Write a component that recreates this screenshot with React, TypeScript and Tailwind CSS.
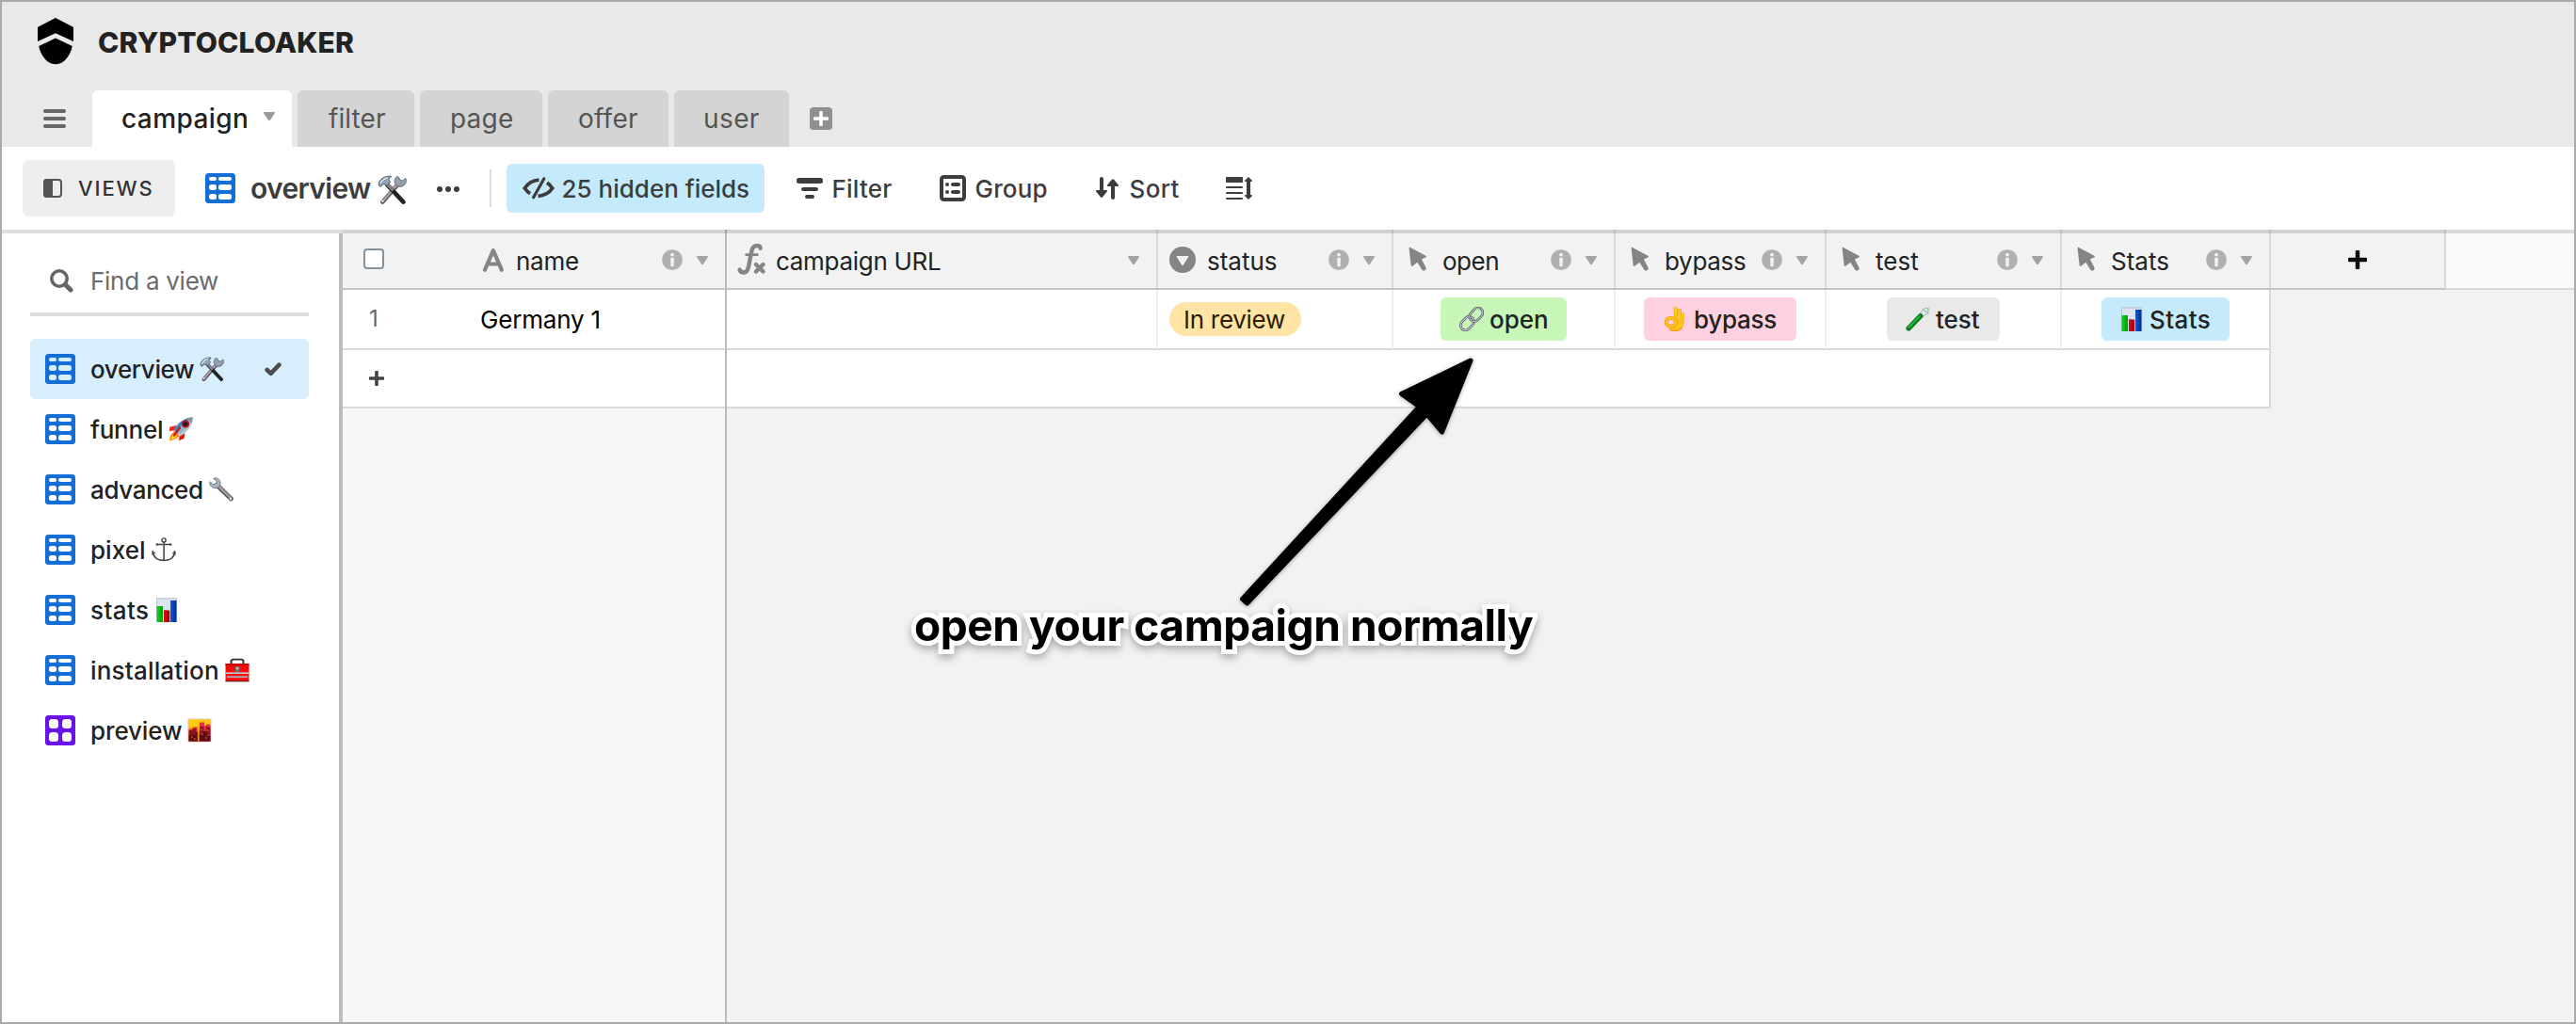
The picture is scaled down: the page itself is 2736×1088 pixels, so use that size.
import type { ReactNode } from "react";

/* ---------- interface icons ---------- */

const Logo = () => (
  <svg width="38" height="50" viewBox="0 0 38 50" className="block">
    <path d="M19 0 37.3 9.6 Q38 10 38 10.8V25L19 16.2 0 25V10.8Q0 10 .7 9.6Z" fill="#000" />
    <path d="M19 21.4 36.8 30C35 38.6 29 49.2 19 49.2S3 38.6 1.2 30Z" fill="#000" />
  </svg>
);

const Burger = () => (
  <div className="flex w-6 flex-col gap-1">
    <span className="h-1 rounded-full bg-[#666]" />
    <span className="h-1 rounded-full bg-[#666]" />
    <span className="h-1 rounded-full bg-[#666]" />
  </div>
);

const Caret = ({ fill = "#a3a3a3" }: { fill?: string }) => (
  <svg width="12" height="10" viewBox="0 0 12 10" className="block shrink-0">
    <path d="M1 0h10c.9 0 1.200.8.7 1.500L7 8.400c-.5.7-1.500.7-2 0L.3 1.500C-.2.8.1 0 1 0Z" fill={fill} />
  </svg>
);

const GridIcon = ({ hole = "#fff" }: { hole?: string }) => (
  <svg width="32" height="32" viewBox="0 0 32 32" className="block shrink-0">
    <rect width="32" height="32" rx="3.500" fill="#146ed6" />
    <g fill={hole}>
      <rect x="4" y="4" width="8" height="4" rx="2" />
      <rect x="14" y="4" width="14" height="4" rx="2" />
      <rect x="4" y="12" width="8" height="6" rx="2.500" />
      <rect x="14" y="12" width="14" height="6" rx="2.500" />
      <rect x="4" y="22" width="8" height="6" rx="2.500" />
      <rect x="14" y="22" width="14" height="6" rx="2.500" />
    </g>
  </svg>
);

const GalleryIcon = () => (
  <svg width="32" height="32" viewBox="0 0 32 32" className="block shrink-0">
    <rect width="32" height="32" rx="3.500" fill="#6913e8" />
    <g fill="#fff">
      <rect x="4" y="4" width="10" height="10" rx="3.500" />
      <rect x="18" y="4" width="10" height="10" rx="3.500" />
      <rect x="4" y="18" width="10" height="10" rx="3.500" />
      <rect x="18" y="18" width="10" height="10" rx="3.500" />
    </g>
  </svg>
);

const PanelIcon = () => (
  <svg width="20" height="20" viewBox="0 0 20 20" className="block">
    <rect x="1" y="1" width="18" height="18" rx="3" fill="none" stroke="#555" strokeWidth="2" />
    <path d="M4 0h6v20H4a4 4 0 0 1-4-4V4a4 4 0 0 1 4-4Z" fill="#555" />
  </svg>
);

const HiddenIcon = () => (
  <svg width="34" height="24" viewBox="0 0 34 24" className="block">
    <g fill="none" stroke="#3d3d3d" strokeWidth="3.800">
      <path d="M17.500 3.200C10 3.800 5 8 2.300 12c1.600 2.400 3.400 4.200 5.800 5.700" />
      <path d="M16.500 20.300C24 19.800 29 16 31.700 12c-1.500-2.300-3.300-4.200-5.700-5.800" />
      <path d="M22.700 2 11.600 21.700" strokeWidth="3.200" strokeLinecap="round" />
    </g>
  </svg>
);

const FilterIcon = () => (
  <svg width="28" height="22" viewBox="0 0 28 22" className="block" fill="#3d3d3d">
    <rect width="28" height="6" rx="2.500" />
    <rect x="5" y="10" width="18" height="4" rx="2" />
    <rect x="9" y="18" width="10" height="4" rx="2" />
  </svg>
);

const GroupIcon = () => (
  <svg width="28" height="28" viewBox="0 0 28 28" className="block" fill="#3d3d3d">
    <rect x="2" y="2" width="24" height="24" rx="2.500" fill="none" stroke="#3d3d3d" strokeWidth="4" />
    <circle cx="8" cy="10" r="2" />
    <circle cx="8" cy="18" r="2" />
    <rect x="12" y="8" width="10" height="4" rx="2" />
    <rect x="12" y="16" width="10" height="4" rx="2" />
  </svg>
);

const SortIcon = () => (
  <svg width="24" height="24" viewBox="0 0 24 24" className="block" fill="#3d3d3d">
    <path d="M4 2a2 2 0 0 1 4 0v12h3.200c.8 0 1.100.9.6 1.500L7.200 21.200c-.7.9-1.700.9-2.400 0L.2 15.500c-.5-.6-.2-1.500.6-1.500H4Z" />
    <path d="M20 22a2 2 0 0 1-4 0V10h-3.200c-.8 0-1.100-.9-.6-1.500l4.600-5.700c.7-.9 1.700-.9 2.400 0l4.600 5.700c.5.6.2 1.500-.6 1.500H20Z" />
  </svg>
);

const RowHeightIcon = () => (
  <svg width="28" height="24" viewBox="0 0 28 24" className="block" fill="#3d3d3d">
    <rect y="0" width="18" height="6" rx=".8" />
    <rect y="10" width="18" height="2" rx="1" />
    <rect y="16" width="18" height="2" rx="1" />
    <rect y="22" width="18" height="2" rx="1" />
    <path d="m24 0 3.600 3.600c.7.7.3 1.400-.5 1.400H26v14h1.100c.8 0 1.200.7.5 1.400L24 24l-3.600-3.600c-.7-.7-.3-1.400.5-1.400H22V5h-1.100c-.8 0-1.200-.7-.5-1.400Z" />
  </svg>
);

const SearchIcon = () => (
  <svg width="25" height="25" viewBox="0 0 25 25" className="block" fill="none" stroke="#666">
    <circle cx="10" cy="10" r="8.200" strokeWidth="3.600" />
    <path d="m16.500 16.500 5.500 5.500" strokeWidth="5" strokeLinecap="round" />
  </svg>
);

const CheckIcon = () => (
  <svg width="18" height="15" viewBox="0 0 18 15" className="block">
    <path d="m2.600 8 4 3.900L15.400 2.700" fill="none" stroke="#4d4d4d" strokeWidth="4.600" strokeLinecap="round" strokeLinejoin="round" />
  </svg>
);

const PlusIcon = ({ size, fill }: { size: number; fill: string }) => (
  <svg width={size} height={size} viewBox="0 0 16 16" className="block" fill={fill}>
    <rect x="6.200" width="3.600" height="16" rx=".8" />
    <rect y="6.200" width="16" height="3.600" rx=".8" />
  </svg>
);

const InfoIcon = () => (
  <svg width="22" height="22" viewBox="0 0 22 22" className="block shrink-0">
    <circle cx="11" cy="11" r="10.800" fill="#b0b0b0" />
    <circle cx="11" cy="5.600" r="1.900" fill="#f2f2f2" />
    <rect x="9.300" y="8.800" width="3.500" height="9.400" rx="1" fill="#f2f2f2" />
  </svg>
);

const TextTypeIcon = () => (
  <svg width="28" height="28" viewBox="0 0 28 28" className="block" fill="none" stroke="#858585" strokeWidth="4.200" strokeLinecap="round" strokeLinejoin="round">
    <path d="M5 24.700 13.900 4.200 22.800 24.700M8 18.500h12" />
  </svg>
);

const FormulaIcon = () => (
  <svg width="30" height="34" viewBox="0 0 30 34" className="block" fill="none" stroke="#858585" strokeLinecap="round">
    <path d="M24.600 4.800c-.2-2-1.600-2.800-3.600-2.800-3.400 0-5 2.200-5.800 6.200L12 24.500c-.8 4-2 6-5 6-2.200 0-3.800-1-4.400-3" strokeWidth="4.400" />
    <path d="M9.500 11.600h12" strokeWidth="2.600" />
    <path d="m20 22 7.500 7.500m0-7.500L20 29.500" strokeWidth="4.400" />
  </svg>
);

const SelectIcon = () => (
  <svg width="28" height="28" viewBox="0 0 28 28" className="block">
    <circle cx="14" cy="14" r="14" fill="#858585" />
    <path d="M8.500 10h11c.8 0 1 .6.600 1.200l-5.200 8.200c-.5.8-1.300.8-1.800 0l-5.200-8.200c-.4-.6-.2-1.200.6-1.200Z" fill="#f2f2f2" />
  </svg>
);

const CursorIcon = () => (
  <svg width="28" height="28" viewBox="0 0 28 28" className="block">
    <path d="M4.600 1.800C4.500.9 5.200.6 5.900 1L22.300 9.800c.9.500.9 1.200 0 1.600l-4.400 2.100 4.500 8.500c1.400 2.800-2.600 5.300-4.400 2.300L13.400 16.800 8.600 20.500c-1 .8-1.900.4-2-.7Z" fill="#858585" />
  </svg>
);

/* ---------- emoji drawings ---------- */

const Emoji = ({ size = 26, children }: { size?: number; children: ReactNode }) => (
  <svg width={size} height={size} viewBox="0 0 26 26" className="block shrink-0">
    {children}
  </svg>
);

const Tools = ({ size }: { size?: number }) => (
  <Emoji size={size}>
    <path d="M4.500 24 18 8.500" stroke="#5b5560" strokeWidth="3.800" strokeLinecap="round" />
    <path d="M4.500 23.600 18 8" stroke="#b9a9b2" strokeWidth="1.600" strokeLinecap="round" />
    <path d="M17.500 1.200c-2.600 1.600-3 5-1.300 7.300 2 2.500 5.800 2.500 7.800.3 1.500-1.600 1.900-4 1-6L22.600 5l-2.800-.6-.8-2.400Z" fill="#93a0aa" stroke="#58616b" strokeWidth=".7" />
    <path d="M8.500 8.500 23 24" stroke="#222" strokeWidth="3.800" strokeLinecap="round" />
    <path d="M8.500 8 14 13.600" stroke="#7c8088" strokeWidth="3" />
    <path d="M.8 8.500C1.500 4 5.500.8 11.800 1c.6.100.6.700.1.900C9.800 2.700 9.700 4 11.500 6L8.300 9.500C6.600 8 5.200 7.500 4 9.200L2.200 10.400Z" fill="#8ea3b5" stroke="#4c5966" strokeWidth=".8" />
    <path d="M2.500 7.500C4 4.500 6 3 9 2.400" stroke="#dfeaf2" strokeWidth="1.200" fill="none" />
    <circle cx="4.400" cy="23.200" r=".9" fill="#eee" />
  </Emoji>
);

const Rocket = () => (
  <Emoji>
    <path d="M8.500 9 1.500 10.500.6 15 6 14.500Z" fill="#f5261c" />
    <path d="M17.500 17.500 16.500 23 11 25 11.500 20Z" fill="#e8160c" />
    <path d="M6 15 2 20 1 25.500 7 23.500 11.500 20Z" fill="#ff7a00" />
    <path d="M6.500 17 3.500 20.500 2.300 24.300 6.500 22.500 9 19.500Z" fill="#ffe21a" />
    <path d="M25.600.5C18 1 11 4.500 5.500 14L12 20.500C20 16 25.500 9.500 25.600.5Z" fill="#8fb4cc" />
    <path d="M25.600.5C18 1 11 4.500 5.500 14l2.500 2C13 9 18 4 25.600.5Z" fill="#3f83b8" />
    <path d="M25.600.5C23 9 18 14 10 18.500l2 2C20 16 25.500 9.500 25.600.5Z" fill="#b9c7cf" />
    <path d="M25.600.5c-2.400.1-4.500.4-6.500 1.100l5.300 5.200c.8-2 1.100-4 1.200-6.300Z" fill="#8c8f96" />
    <circle cx="18" cy="7.500" r="4" fill="#b5121b" />
    <circle cx="18" cy="7.500" r="2.300" fill="#191b2b" />
    <path d="M12 11.500 6 19.500" stroke="#c81a10" strokeWidth="2.200" strokeLinecap="round" />
  </Emoji>
);

const Wrench = () => (
  <Emoji>
    <path d="m8.500 8.500 14.800 14.300" stroke="#54555e" strokeWidth="5" strokeLinecap="round" />
    <path d="m8.500 8 14.500 14" stroke="#a99aa0" strokeWidth="2.600" strokeLinecap="round" />
    <path d="M5 1c4-.9 7.400 2 7 6.200C11.600 10.500 8 12.500 4.600 11.300 2.300 10.500.6 8.300.6 5.800l1-.9 2.500 2.700L7.600 7 8.300 4 5 1.800Z" fill="#a7b5c0" stroke="#5f6a75" strokeWidth=".8" />
    <circle cx="23" cy="23" r="1.200" fill="#eee" />
  </Emoji>
);

const Anchor = () => (
  <Emoji>
    <g fill="none" stroke="#3c4046" strokeLinecap="round">
      <circle cx="13" cy="3" r="2.100" strokeWidth="1.400" />
      <path d="M13 5.500V24" strokeWidth="1.800" />
      <path d="M6 7.500h14" strokeWidth="1.300" />
      <path d="M1.500 15.500C2 21.500 7 24.500 13 24.500s11-3 11.500-9" strokeWidth="1.700" />
      <path d="M1 18.500v-4l3 2.600M25 18.500v-4l-3 2.600" strokeWidth="1" />
    </g>
    <path d="M12.700 6v17.500" stroke="#a9afb8" strokeWidth=".6" />
    <circle cx="5.800" cy="7.500" r="1.200" fill="#3c4046" />
    <circle cx="20.200" cy="7.500" r="1.200" fill="#3c4046" />
  </Emoji>
);

const Chart = () => (
  <Emoji>
    <rect x="2" y=".3" width="22" height="25.700" fill="#b9c4d3" />
    <rect x="3" y="1.500" width="20" height="24" fill="#dce5ef" />
    <rect x="2.800" y="9" width="6.200" height="17" fill="#00a80c" />
    <rect x="2.800" y="9" width="3" height="17" fill="#10c41c" />
    <rect x="10" y="13.500" width="6.200" height="12.500" fill="#a8040c" />
    <rect x="10" y="13.500" width="3.200" height="12.500" fill="#cf0a14" />
    <rect x="17.300" y="3" width="6.200" height="23" fill="#0636a0" />
    <rect x="17.300" y="3" width="3" height="23" fill="#0a4cc4" />
  </Emoji>
);

const Toolbox = () => (
  <Emoji>
    <path d="M6.500 7V4c0-1.500 1-2.400 2.500-2.400h8c1.500 0 2.500.9 2.500 2.400v3" fill="none" stroke="#2d2f33" strokeWidth="1.900" />
    <rect x=".5" y="6" width="25" height="19" rx=".8" fill="#fb0a0a" />
    <rect x=".5" y="6" width="25" height="1.800" fill="#c40606" />
    <rect x=".5" y="15.300" width="25" height="1.700" fill="#bfc3c8" />
    <rect x="2" y="19.300" width="22" height="1.900" fill="#a7adb3" />
    <rect x=".5" y="24" width="25" height="1.400" fill="#7c2222" />
    <rect x="10.800" y="9" width="4.600" height="6" rx=".6" fill="#6d6f73" />
    <rect x="12" y="10.200" width="2.200" height="2" fill="#d0d2d4" />
  </Emoji>
);

const Sunset = () => (
  <Emoji>
    <rect x=".2" y=".2" width="25.600" height="25.600" rx=".6" fill="#e6dccf" />
    <rect x="1.600" y="1.600" width="22.800" height="22.800" fill="#ffb000" />
    <rect x="1.600" y="1.600" width="22.800" height="7" fill="#ffcc10" />
    <path d="M1.600 11.500H6V9.500h4.500v4h2.500V4.500h5V8h2V6.500h4.400v17.900H1.600Z" fill="#e8303a" />
    <path d="M1.600 13h3.600V11h4.300v5h3.800V9h4.200v5h2.700v-4.500h4.200v14.900H1.600Z" fill="#8c1420" />
    <path d="M1.600 18h7v-3h3v3h5v-4h4v5h3.800v5.400H1.600Z" fill="#5c0c14" />
    <rect x="10.800" y="12" width="1.800" height="12.400" fill="#f89018" />
    <path d="M4 20h1.500M7 22h1.500M14.500 12h1.500M15 17h1.500M21 13h1.500M19 21h1.500M22 18h1" stroke="#ff9030" strokeWidth="1.200" />
  </Emoji>
);

const Link = () => (
  <Emoji>
    <g fill="none">
      <rect x="-8" y="-5.200" width="16" height="10.400" rx="5.200" transform="translate(8.400 17.600) rotate(-47)" stroke="#5d5864" strokeWidth="2.600" />
      <rect x="-8" y="-5.200" width="16" height="10.400" rx="5.200" transform="translate(8.400 17.600) rotate(-47)" stroke="#c7ccdc" strokeWidth="1.100" />
      <rect x="-8" y="-5.200" width="16" height="10.400" rx="5.200" transform="translate(17.800 8.300) rotate(-47)" stroke="#5d5864" strokeWidth="2.600" />
      <rect x="-8" y="-5.200" width="16" height="10.400" rx="5.200" transform="translate(17.800 8.300) rotate(-47)" stroke="#b4c4d2" strokeWidth="1.100" />
    </g>
  </Emoji>
);

const OkHand = () => (
  <Emoji>
    <g fill="none" strokeLinecap="round">
      <path d="M12.600 2.200 13.400 14" stroke="#e89a10" strokeWidth="4" />
      <path d="M12.600 2.200 13.400 14" stroke="#ffc928" strokeWidth="3" />
      <path d="M16.800 4 16.200 15" stroke="#e89a10" strokeWidth="4" />
      <path d="M16.800 4 16.200 15" stroke="#ffc928" strokeWidth="3" />
      <path d="M20.300 8.500 19.300 17" stroke="#e89a10" strokeWidth="3.800" />
      <path d="M20.300 8.500 19.300 17" stroke="#ffc928" strokeWidth="2.900" />
    </g>
    <path d="M11 12.500 19 11.500C22 13 22.300 17.500 20.800 20.800 19.300 24 16.800 25.700 13.300 25.700 9 25.700 6.500 24 4.800 21L9 16Z" fill="#ffc21c" />
    <path d="M6 24c3.500 2.300 10.500 2.200 13.800-1.800" fill="none" stroke="#ee9a10" strokeWidth="1.200" />
    <ellipse cx="7.800" cy="16.400" rx="5" ry="4.400" fill="#ffd1e0" stroke="#e08a08" strokeWidth="4" />
    <ellipse cx="7.800" cy="16.400" rx="5" ry="4.400" fill="none" stroke="#ffc21c" strokeWidth="2.900" />
  </Emoji>
);

const TestTube = () => (
  <Emoji>
    <path d="M3 23 21.500 4" stroke="#9aa7a4" strokeWidth="5.800" strokeLinecap="round" />
    <path d="M4 22 21.500 4" stroke="#e4efec" strokeWidth="4.200" strokeLinecap="round" />
    <path d="M3.300 22.700 16 9.600" stroke="#067a17" strokeWidth="5" strokeLinecap="round" />
    <path d="M3.300 22 15 10" stroke="#19c437" strokeWidth="1.800" strokeLinecap="round" />
    <path d="m18.500 2.500 5.500 5" stroke="#a7c4b6" strokeWidth="1.600" strokeLinecap="round" />
    <circle cx="23.800" cy="2.300" r="1.500" fill="#8fe0a8" />
  </Emoji>
);

/* ---------- top area ---------- */

const Tab = ({ label, className }: { label: string; className: string }) => (
  <div className={`mr-1.5 flex h-[60px] items-center rounded-t-[6px] bg-[#d4d4d4] text-[28px] text-[#555] ${className}`}>{label}</div>
);

const Header = () => (
  <header className="flex h-[154px] flex-col bg-[#e9e9e9]">
    <div className="flex h-[94px] items-start">
      <div className="ml-[38px] mt-[17px]">
        <Logo />
      </div>
      <h1 className="ml-[26px] mt-[23px] text-[30px] font-extrabold leading-10 tracking-[0.2px] text-[#222]">CRYPTOCLOAKER</h1>
    </div>
    <div className="flex h-[60px] items-center">
      <div className="ml-11 mr-7">
        <Burger />
      </div>
      <div className="mr-1.5 flex h-[60px] w-[212px] items-center rounded-t-[6px] bg-white pl-[31px] text-[28px] font-medium text-[#222]">
        <span className="w-[151px] tracking-[0.4px]">campaign</span>
        <span className="-mt-1">
          <Caret fill="#9a9a9a" />
        </span>
      </div>
      <Tab label="filter" className="w-[124px] pl-[33px] tracking-[0.09px]" />
      <Tab label="page" className="w-[130px] pl-[32px] tracking-[0.2px]" />
      <Tab label="offer" className="w-[128px] pl-[32px] tracking-[0.27px]" />
      <Tab label="user" className="w-[122px] pl-[31px] tracking-[0.4px]" />
      <div className="ml-4 flex size-6 items-center justify-center rounded bg-[#8f8f8f]">
        <PlusIcon size={16} fill="#fff" />
      </div>
    </div>
  </header>
);

const Toolbar = () => (
  <div className="flex h-[88px] items-center bg-white text-[26px] font-medium text-[#3d3d3d]">
    <div className="ml-[22px] flex h-[60px] w-[162px] items-center rounded-[6px] bg-[#eee] pl-[22px] text-[22px] text-[#333]">
      <PanelIcon />
      <span className="ml-[17px] tracking-[1.9px]">VIEWS</span>
    </div>
    <div className="ml-8">
      <GridIcon />
    </div>
    <span className="ml-4 text-[30px] font-semibold tracking-[-0.66px]">overview</span>
    <span className="ml-[7px] mt-0.5">
      <Tools size={31} />
    </span>
    <div className="ml-8 mt-[2px] flex gap-[3px]">
      <span className="size-1.5 rounded-full bg-[#3d3d3d]" />
      <span className="size-1.5 rounded-full bg-[#3d3d3d]" />
      <span className="size-1.5 rounded-full bg-[#3d3d3d]" />
    </div>
    <div className="ml-8 h-10 w-0.5 bg-[#ddd]" />
    <div className="ml-4 flex h-[52px] w-[274px] items-center rounded-[6px] bg-[#c4eafb] pl-[17px]">
      <HiddenIcon />
      <span className="ml-2">25 hidden fields</span>
    </div>
    <div className="ml-[34px] flex items-center">
      <FilterIcon />
      <span className="ml-[10px] w-[114px] tracking-[0.2px]">Filter</span>
      <GroupIcon />
      <span className="ml-[10px] w-[128px] tracking-[0.16px]">Group</span>
      <SortIcon />
      <span className="ml-3 w-[102px] tracking-[0.3px]">Sort</span>
      <RowHeightIcon />
    </div>
  </div>
);

/* ---------- sidebar ---------- */

type View = { label: string; tracking: string; emoji: ReactNode; gallery?: boolean; active?: boolean };

const views: View[] = [
  { label: "overview", tracking: "tracking-[-0.39px]", emoji: <Tools />, active: true },
  { label: "funnel", tracking: "tracking-[-0.21px]", emoji: <Rocket /> },
  { label: "advanced", tracking: "tracking-[-0.35px]", emoji: <Wrench /> },
  { label: "pixel", tracking: "tracking-[0.04px]", emoji: <Anchor /> },
  { label: "stats", tracking: "tracking-[0.4px]", emoji: <Chart /> },
  { label: "installation", tracking: "tracking-[0.19px]", emoji: <Toolbox /> },
  { label: "preview", tracking: "tracking-[-0.12px]", emoji: <Sunset />, gallery: true },
];

const Sidebar = () => (
  <aside className="flex w-[362px] shrink-0 pt-1">
    <div className="w-[358px] bg-white pl-[30px] pr-8">
      <div className="flex h-[84px] items-center pl-[21px] pt-[17px]">
        <SearchIcon />
        <span className="ml-[18px] text-[26px] tracking-[-0.27px] text-[#6b6b6b]">Find a view</span>
      </div>
      <div className="mb-6 h-1 bg-[#dedede]" />
      {views.map((v) => (
        <div
          key={v.label}
          className={`flex h-16 items-center rounded-[6px] pl-4 pr-[29px] text-[26px] font-medium text-[#222] ${v.active ? "bg-[#d7effd]" : ""}`}
        >
          {v.gallery ? <GalleryIcon /> : <GridIcon hole={v.active ? "#d7effd" : "#fff"} />}
          <span className={`ml-4 mr-1.5 ${v.tracking}`}>{v.label}</span>
          {v.emoji}
          {v.active && (
            <span className="ml-auto">
              <CheckIcon />
            </span>
          )}
        </div>
      ))}
    </div>
    <div className="w-1 bg-[#bcbcbc]" />
  </aside>
);

/* ---------- table ---------- */

type Column = { label: string; width: string; tracking: string; icon: ReactNode; info: boolean; cell: ReactNode };

const ActionButton = ({ label, emoji, className }: { label: string; emoji: ReactNode; className: string }) => (
  <div className={`flex h-[46px] items-center rounded-[6px] font-medium text-[#222] ${className}`}>
    {emoji}
    <span className="ml-[6px]">{label}</span>
  </div>
);

const columns: Column[] = [
  { label: "campaign URL", width: "w-[458px]", tracking: "tracking-[-0.3px]", icon: <FormulaIcon />, info: false, cell: null },
  {
    label: "status",
    width: "w-[250px]",
    tracking: "",
    icon: <SelectIcon />,
    info: true,
    cell: (
      <div className="ml-3 flex h-9 w-[140px] items-center rounded-full bg-[#ffe4a6] pl-[15px] tracking-[-0.28px] text-[#2b1c00]">In review</div>
    ),
  },
  {
    label: "open",
    width: "w-[236px]",
    tracking: "tracking-[-0.5px]",
    icon: <CursorIcon />,
    info: true,
    cell: <ActionButton label="open" emoji={<Link />} className="ml-[50px] w-[134px] bg-[#c8f6b8] pl-5" />,
  },
  {
    label: "bypass",
    width: "w-[224px]",
    tracking: "tracking-[-0.3px]",
    icon: <CursorIcon />,
    info: true,
    cell: <ActionButton label="bypass" emoji={<OkHand />} className="ml-[30px] w-[162px] bg-[#ffd1e0] pl-[21px] tracking-[-0.3px]" />,
  },
  {
    label: "test",
    width: "w-[250px]",
    tracking: "",
    icon: <CursorIcon />,
    info: true,
    cell: <ActionButton label="test" emoji={<TestTube />} className="ml-16 w-[120px] bg-[#e9e9e9] pl-5" />,
  },
  {
    label: "Stats",
    width: "w-[222px]",
    tracking: "",
    icon: <CursorIcon />,
    info: true,
    cell: <ActionButton label="Stats" emoji={<Chart />} className="ml-[42px] w-[136px] bg-[#c4eafb] pl-[19px] tracking-[0.4px]" />,
  },
];

const FrozenPane = () => (
  <div className="flex w-[408px] flex-col border-r-2 border-[#bbb] bg-[#f7f7f7]">
    <div className="flex h-16 items-center border-b-2 border-[#c4c4c4] bg-[#f2f2f2] pt-1">
      <div className="ml-[22px] size-[22px] -mt-1 rounded border-2 border-[#84909a] bg-white" />
      <div className="-mt-0.5 ml-[102px]">
        <TextTypeIcon />
      </div>
      <span className="ml-[10px] tracking-[-0.25px]">name</span>
      <div className="ml-auto mr-[18px] flex items-center gap-[15px]">
        <span className="-mt-0.5">
          <InfoIcon />
        </span>
        <Caret />
      </div>
    </div>
    <div className="flex h-16 items-center border-b-2 border-[#d5dade] bg-white">
      <span className="w-[146px] pl-7 text-2xl text-[#666]">1</span>
      <span className="tracking-[-0.2px] text-black">Germany 1</span>
    </div>
    <div className="flex h-[62px] items-center border-b-2 border-[#d5dade] bg-white pl-7">
      <PlusIcon size={16} fill="#444" />
    </div>
  </div>
);

const Grid = () => (
  <div className="flex flex-1 flex-col">
    <div className="flex h-16">
      {columns.map((c) => (
        <div key={c.label} className={`${c.width} flex shrink-0 flex-col`}>
          <div className="flex h-[62px] items-center border-r-2 border-[#d5dade] bg-[#f2f2f2] pt-1">
            <div className="-mt-0.5 ml-[11px] flex w-[30px] justify-center">{c.icon}</div>
            <span className={`ml-[11px] ${c.tracking}`}>{c.label}</span>
            <div className="ml-auto mr-[18px] flex items-center gap-[15px]">
              {c.info && (
                <span className="-mt-0.5">
                  <InfoIcon />
                </span>
              )}
              <Caret />
            </div>
          </div>
          <div className="h-0.5 bg-[#c4c4c4]" />
        </div>
      ))}
      <div className="flex w-[186px] shrink-0 items-center justify-center border-b-2 border-r-2 border-b-[#c4c4c4] border-r-[#d5dade] bg-[#f2f2f2] pt-1">
        <span className="-mt-0.5">
          <PlusIcon size={20} fill="#111" />
        </span>
      </div>
      <div className="flex-1 border-b-2 border-[#d5dade] bg-[#fafafa]" />
    </div>
    <div className="flex h-16">
      {columns.map((c, i) => (
        <div
          key={c.label}
          className={`${c.width} flex shrink-0 items-center border-b-2 border-r-2 border-b-[#d5dade] bg-white ${i === columns.length - 1 ? "border-r-[#d5dade]" : "border-r-[#ededed]"}`}
        >
          {c.cell}
        </div>
      ))}
    </div>
    <div className="h-[62px] w-[1640px] border-b-2 border-r-2 border-[#d5dade] bg-white" />
  </div>
);

/* ---------- annotation ---------- */

const Annotation = () => (
  <div className="pointer-events-none absolute left-[968px] top-[374px] h-[340px] w-[680px]">
    <svg width="680" height="340" viewBox="970 376 680 340" className="absolute left-0 top-0 drop-shadow-[0_1px_2px_rgba(0,0,0,0.35)]">
      <path
        d="M1562 383 1488.500 418.500 1507.500 432 1319.500 636.500 1324.500 641 1515.500 440 1531.500 459Z"
        fill="#000"
        stroke="#000"
        strokeWidth="5"
        strokeLinejoin="round"
      />
    </svg>
    <p className="absolute left-px top-[260px] whitespace-nowrap text-[46px] font-bold leading-[56px] tracking-[-0.42px] text-black [-webkit-text-stroke:10px_white] [paint-order:stroke_fill] [stroke-linejoin:round] drop-shadow-[0_4px_4px_rgba(0,0,0,0.3)]">
      open your campaign normally
    </p>
  </div>
);

export default function App() {
  return (
    <div className="relative flex h-[1088px] w-[2736px] flex-col overflow-hidden border-2 border-[#aaa] bg-[#f2f2f2] font-[Inter,sans-serif] text-[26px] text-[#222]">
      <Header />
      <Toolbar />
      <main className="relative flex flex-1 bg-white">
        <Sidebar />
        <div className="flex flex-1 bg-[#f2f2f2]">
          <FrozenPane />
          <Grid />
        </div>
        <div className="absolute inset-x-0 top-0 h-1 bg-black/13" />
      </main>
      <Annotation />
    </div>
  );
}
